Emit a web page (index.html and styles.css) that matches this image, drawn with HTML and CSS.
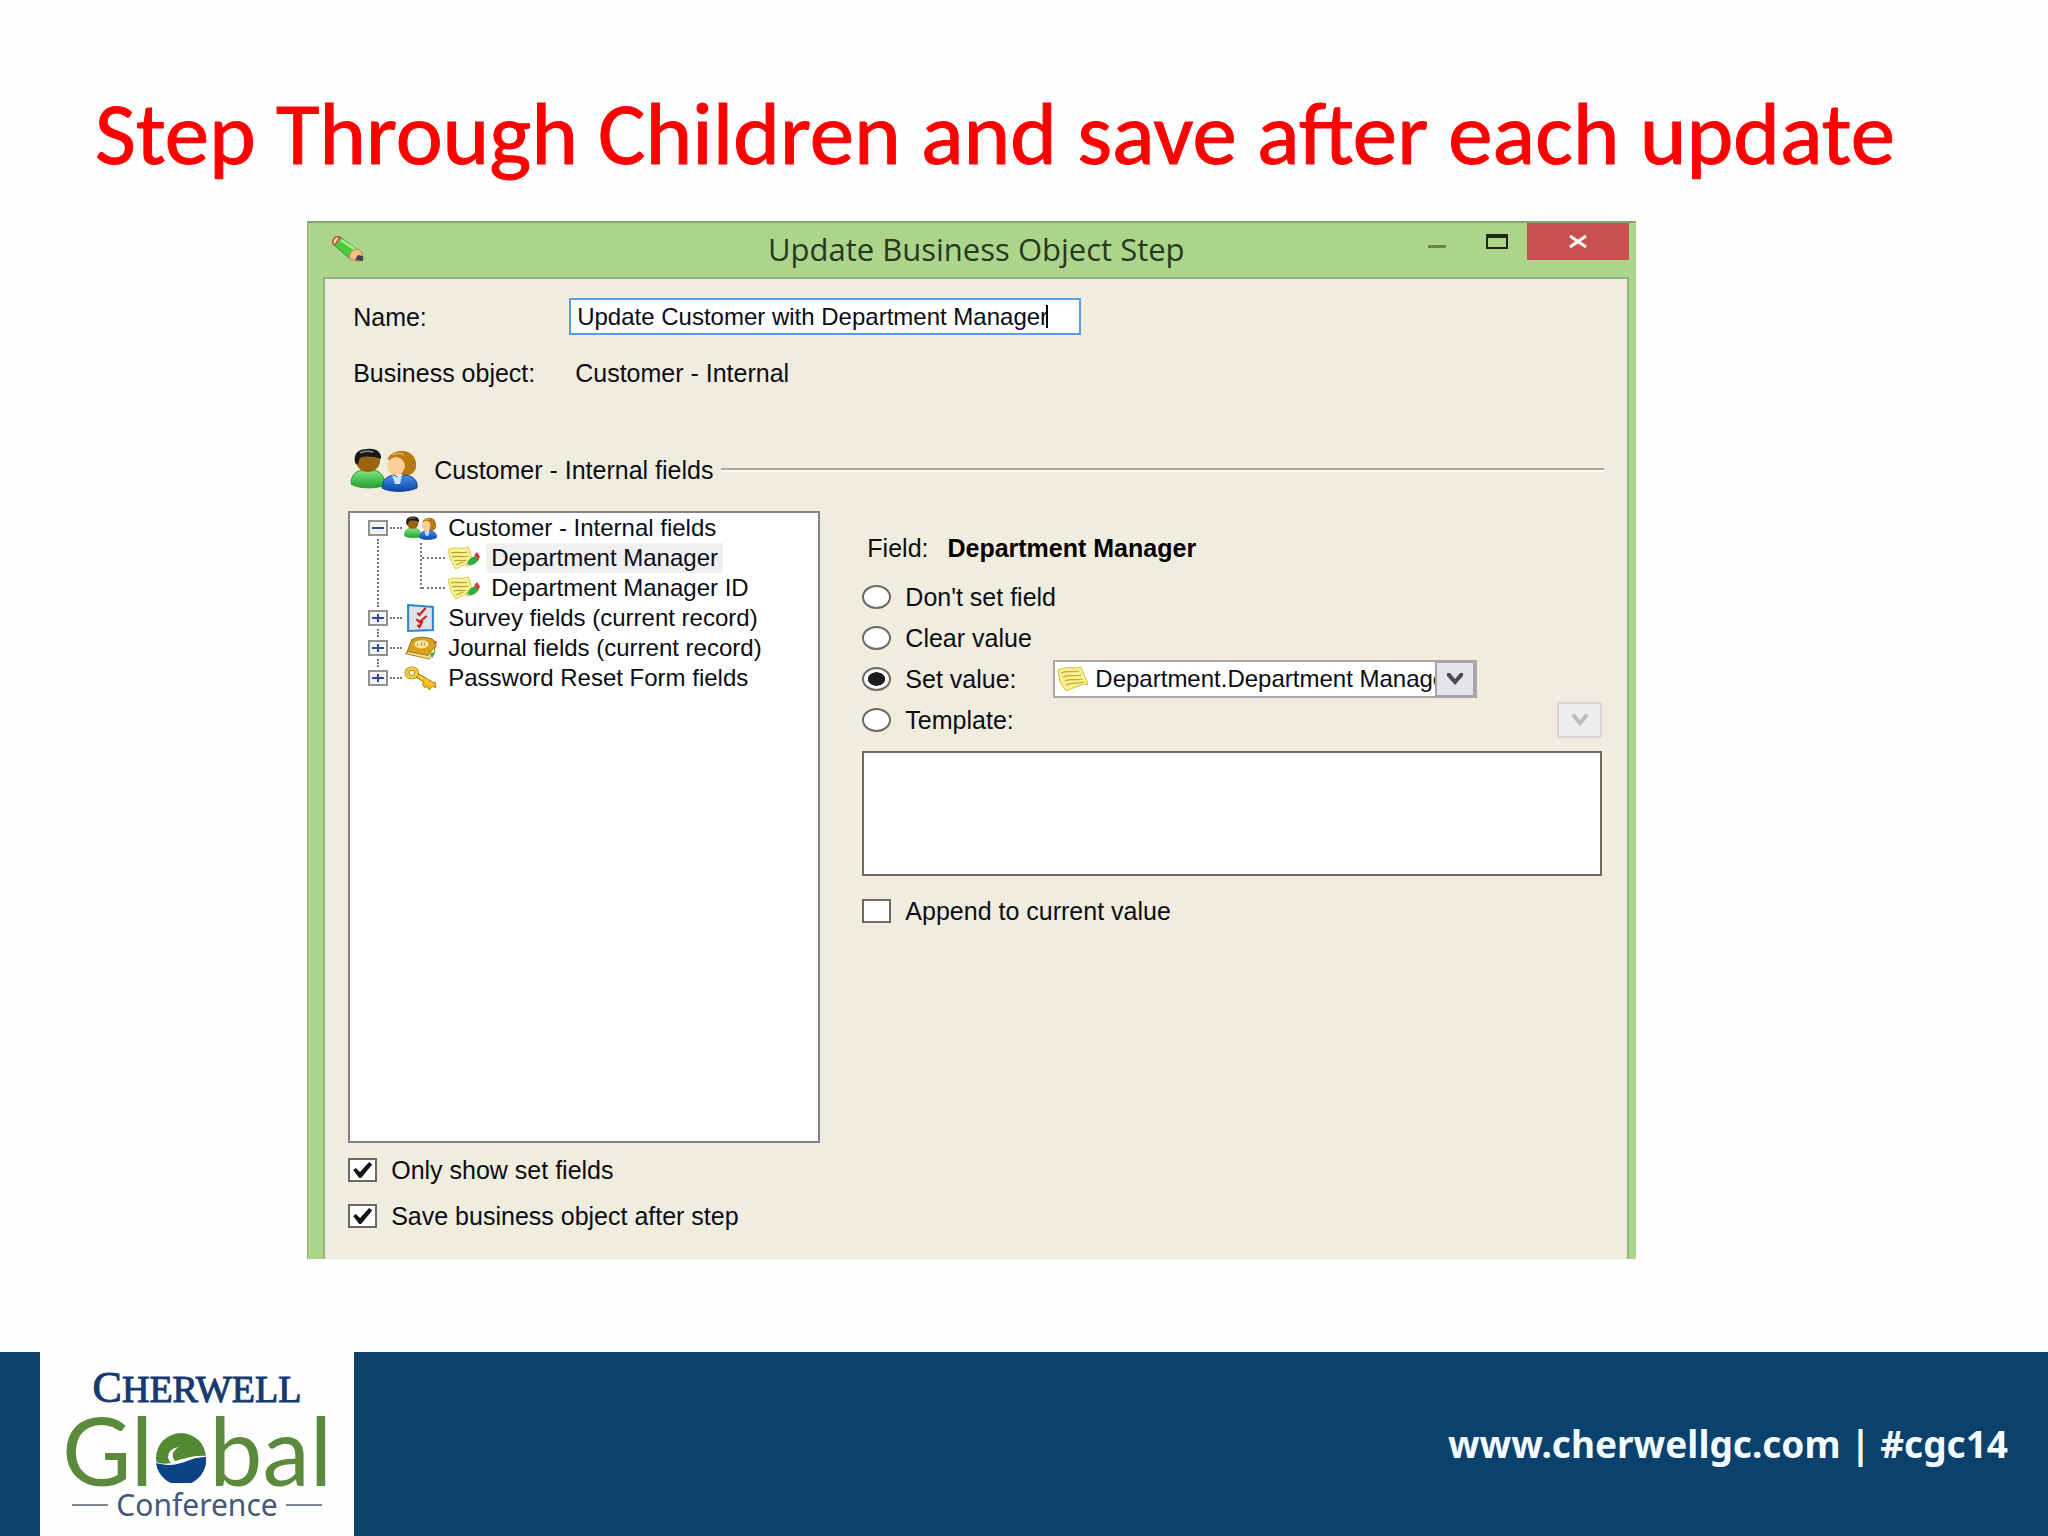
FILE: index.html
```html
<!DOCTYPE html>
<html lang="en">
<head>
    <meta charset="UTF-8">
    <meta name="viewport" content="width=device-width, initial-scale=1.0">
    <title>Step Through Children and save after each update</title>
    <link rel="stylesheet" href="styles.css">
</head>
<body>

    <!-- shared icons -->
    <svg class="sprite" aria-hidden="true">
        <defs>
            <linearGradient id="greenShirt" x1="0" y1="0" x2="0" y2="1">
                <stop offset="0" stop-color="#8be88a"/><stop offset="1" stop-color="#1fa32c"/>
            </linearGradient>
            <linearGradient id="blueShirt" x1="0" y1="0" x2="0" y2="1">
                <stop offset="0" stop-color="#4b93e6"/><stop offset="1" stop-color="#0a45a8"/>
            </linearGradient>
        </defs>
        <symbol id="people" viewBox="0 0 68 44" preserveAspectRatio="none">
            <path d="M1 36c0-9 5-14 16-15 12 0 18 6 18 16-9 4-26 4-34-1z" fill="url(#greenShirt)" stroke="#2c9a35"/>
            <ellipse cx="18" cy="13" rx="12" ry="11" fill="#9a6410"/>
            <path d="M5 15C3 5 9 1 17 1c9-1 15 3 14 10-6-3-15-3-19-2-3 1-3 4-4 8z" fill="#17181a"/>
            <path d="M10 5c4-2 9-2 13-1" stroke="#777" stroke-width="2" fill="none"/>
            <path d="M38 11c3-5 8-8 14-8 8 0 14 6 14 14 0 7-5 11-13 11z" fill="#b87a14"/>
            <ellipse cx="46" cy="18" rx="9" ry="9" fill="#fbcf96"/>
            <path d="M37 12c5-6 13-5 17 0 2 5 1 10-1 15 9 1 13-4 13-10C66 8 60 3 51 3c-7 0-12 4-14 9z" fill="#b87a14"/>
            <path d="M42 7c4-2 9-2 12 0" stroke="#dba53c" stroke-width="2" fill="none"/>
            <path d="M32 40c0-8 5-12 12-13l5 3 6-3c9 1 13 6 12 13-8 4-27 5-35 0z" fill="url(#blueShirt)" stroke="#0e4599"/>
            <path d="M42 27l3 9h5l2-9-5 2z" fill="#c9e6fb"/>
        </symbol>
        <symbol id="note" viewBox="0 0 32 26" preserveAspectRatio="none">
            <path d="M1 4C8 0 17 3 24 1l7 17c-6 0-12 3-22 7L3 16z" fill="#fbf08e" stroke="#d6bd3a"/>
            <path d="M4 7c6-3 12 0 18-2M6 11c6-3 12 0 18-2M8 15c6-3 12 0 17-2M9 19c6-3 12-1 18-3" stroke="#c4a936" stroke-width="1.2" fill="none"/>
        </symbol>
        <symbol id="note-edit" viewBox="0 0 34 24" preserveAspectRatio="none">
            <path d="M1 4C7 0 15 4 22 1l5 16c-6 0-10 2-18 6L4 15z" fill="#fbf390" stroke="#d9c64e"/>
            <path d="M4 7c5-2 11 1 17-1M5 11c5-2 11 1 17-1M7 15c5-2 9 1 13-1M9 19l8-3" stroke="#b5a338" stroke-width="1.3" fill="none"/>
            <path d="M20 18c3-5 5-7 9-8l4 3c-2 4-6 6-11 7z" fill="#31ad3d"/>
            <path d="M28 9l3-3 3 5-2 3z" fill="#d8392f"/>
            <path d="M19 21l2-4 3 3z" fill="#f3c58a"/>
        </symbol>
        <symbol id="chevron" viewBox="0 0 16 12">
            <path d="M0 0h3l5 6 5-6h3v3l-8 9-8-9z" fill="currentColor"/>
        </symbol>
    </svg>

    <h1>Step Through Children and save after each update</h1>

    <main class="dialog">
        <div class="titlebar">
            <svg class="pencil" viewBox="0 0 32 26" aria-hidden="true">
                <path d="M1 4c1-3 4-4 7-3l17 12-8 9L2 9C0 7 0 5 1 4z" fill="#4cc83c" stroke="#2f9129"/>
                <path d="M9 4l15 10" stroke="#9cf089" stroke-width="3"/>
                <path d="M1 5c1-4 4-5 7-4L3 9C1 8 0 7 1 5z" fill="#f6dcd4" stroke="#cc4a3e" stroke-width="1.5"/>
                <path d="M25 13c4 1 6 4 6 11-4 2-9 1-14-2 0-5 4-9 8-9z" fill="#f1bd83" stroke="#b98349"/>
                <path d="M26 19l5 1v5l-8-1z" fill="#444"/>
            </svg>
            <h2>Update Business Object Step</h2>
            <div class="window-buttons">
                <button type="button" aria-label="Minimize"><span class="min-glyph"></span></button>
                <button type="button" aria-label="Maximize"><span class="max-glyph"></span></button>
                <button type="button" class="close" aria-label="Close">
                    <svg width="18" height="13" viewBox="0 0 18 13"><path d="M1 1l16 11M17 1L1 12" stroke="#fff" stroke-width="3"/></svg>
                </button>
            </div>
        </div>

        <form class="client">
            <div class="form-row">
                <label for="stepName">Name:</label>
                <div class="name-box">
                    <input type="text" id="stepName" value="Update Customer with Department Manager">
                    <span class="caret"></span>
                </div>
            </div>
            <div class="form-row">
                <span>Business object:</span>
                <span class="object-name">Customer - Internal</span>
            </div>

            <div class="section-head">
                <svg class="section-icon" aria-hidden="true"><use href="#people"/></svg>
                <span>Customer - Internal fields</span>
                <span class="rule"></span>
            </div>

            <div class="panels">
                <div class="left">
                    <ul class="tree">
                        <li>
                            <div class="node">
                                <button type="button" class="toggle open" aria-label="Collapse"></button>
                                <span class="dots"></span>
                                <svg class="node-icon" aria-hidden="true"><use href="#people"/></svg>
                                <span class="text">Customer - Internal fields</span>
                            </div>
                            <ul class="children">
                                <li class="node">
                                    <span class="dots"></span>
                                    <svg class="node-icon" aria-hidden="true"><use href="#note-edit"/></svg>
                                    <span class="text selected">Department Manager</span>
                                </li>
                                <li class="node">
                                    <span class="dots"></span>
                                    <svg class="node-icon" aria-hidden="true"><use href="#note-edit"/></svg>
                                    <span class="text">Department Manager ID</span>
                                </li>
                            </ul>
                        </li>
                        <li>
                            <div class="node">
                                <button type="button" class="toggle" aria-label="Expand"></button>
                                <span class="dots"></span>
                                <svg class="node-icon survey" viewBox="0 0 32 28" preserveAspectRatio="none" aria-hidden="true">
                                    <path d="M4 1l24 2v23L4 27z" fill="#dfe3e8" stroke="#2d86cc" stroke-width="2"/>
                                    <path d="M13 9l2 2 6-7M12 15l3 3 7-6M13 21l2 2 3-6" stroke="#c2271f" stroke-width="2.2" fill="none"/>
                                </svg>
                                <span class="text">Survey fields (current record)</span>
                            </div>
                        </li>
                        <li>
                            <div class="node">
                                <button type="button" class="toggle" aria-label="Expand"></button>
                                <span class="dots"></span>
                                <svg class="node-icon" viewBox="0 0 34 26" preserveAspectRatio="none" aria-hidden="true">
                                    <path d="M8 4c7-4 17-3 22 0l3 7-6 11-24-4z" fill="#d9a21b" stroke="#8d6410"/>
                                    <path d="M1 19l4-2 20 4 6-9 1 5-6 8z" fill="#f3dd95" stroke="#a57a1a"/>
                                    <ellipse cx="18" cy="9" rx="8" ry="5" fill="#f9e7a4" stroke="#c8941f"/>
                                    <path d="M14 8v3M18 7v4M21 7v4" stroke="#c8941f"/>
                                    <path d="M27 19l5-1-3 6z" fill="#36a83c"/>
                                    <path d="M31 5l3 1-1 4z" fill="#e0522d"/>
                                </svg>
                                <span class="text">Journal fields (current record)</span>
                            </div>
                        </li>
                        <li>
                            <div class="node">
                                <button type="button" class="toggle" aria-label="Expand"></button>
                                <span class="dots"></span>
                                <svg class="node-icon" viewBox="0 0 34 28" preserveAspectRatio="none" aria-hidden="true">
                                    <path d="M12 10l18 12" stroke="#a87b0c" stroke-width="6"/>
                                    <path d="M19 21l3-4 5 3 5-1 1 6-4-1-3 4-2-4-3 1z" fill="#eebd1f" stroke="#a87b0c"/>
                                    <path d="M12 10l18 12" stroke="#f3c62a" stroke-width="4"/>
                                    <ellipse cx="8" cy="8" rx="5" ry="5" fill="none" stroke="#a87b0c" stroke-width="5"/>
                                    <ellipse cx="8" cy="8" rx="5" ry="5" fill="none" stroke="#f5cd3a" stroke-width="3.6"/>
                                </svg>
                                <span class="text">Password Reset Form fields</span>
                            </div>
                        </li>
                    </ul>
                    <div class="check-row">
                        <input type="checkbox" id="onlySet" checked>
                        <label for="onlySet">Only show set fields</label>
                    </div>
                    <div class="check-row">
                        <input type="checkbox" id="saveAfter" checked>
                        <label for="saveAfter">Save business object after step</label>
                    </div>
                </div>

                <div class="right">
                    <div class="field-name">Field: <strong>Department Manager</strong></div>
                    <div class="option">
                        <input type="radio" name="mode" id="modeNone">
                        <label for="modeNone">Don't set field</label>
                    </div>
                    <div class="option">
                        <input type="radio" name="mode" id="modeClear">
                        <label for="modeClear">Clear value</label>
                    </div>
                    <div class="option">
                        <input type="radio" name="mode" id="modeSet" checked>
                        <label for="modeSet">Set value:</label>
                        <div class="combo">
                            <svg class="combo-icon" aria-hidden="true"><use href="#note"/></svg>
                            <select aria-label="Value">
                                <option>Department.Department Manager</option>
                            </select>
                            <span class="combo-arrow"><svg width="16" height="12"><use href="#chevron"/></svg></span>
                        </div>
                    </div>
                    <div class="option">
                        <input type="radio" name="mode" id="modeTemplate">
                        <label for="modeTemplate">Template:</label>
                        <button type="button" class="template-menu" aria-label="Template menu" disabled>
                            <svg width="16" height="12"><use href="#chevron"/></svg>
                        </button>
                    </div>
                    <textarea aria-label="Template text"></textarea>
                    <div class="check-row">
                        <input type="checkbox" id="append">
                        <label for="append">Append to current value</label>
                    </div>
                </div>
            </div>
        </form>
    </main>

    <footer>
        <div class="logo">
            <div class="logo-top"><span class="big">C</span>HERWELL</div>
            <div class="logo-mid">
                <span>Gl</span>
                <svg class="globe" viewBox="0 0 50 50" aria-label="o">
                    <circle cx="25" cy="25" r="25" fill="#538a34"/>
                    <path d="M0 30c12 3 21 2 29-2s14-5 21-4a25 25 0 0 1-50 6z" fill="#0b4384"/>
                    <path d="M0 29c5 2 10 2 15 1-5-5-4-14 8-16-7 4-8 9-4 14 10-2 17-6 31-5v1c-12 0-17 4-25 6-9 3-17 2-25 0z" fill="#fff"/>
                </svg>
                <span>bal</span>
            </div>
            <div class="logo-bottom"><span>Conference</span></div>
        </div>
        <p class="site">www.cherwellgc.com | #cgc14</p>
    </footer>

</body>
</html>
```
FILE: styles.css
```css
* {
    box-sizing: border-box;
}

body {
    margin: 0;
    min-height: 100vh;
    display: flex;
    flex-direction: column;
    background-color: #fefefe;
    color: #0c0c14;
    font-family: "Liberation Sans", Arial, sans-serif;
    font-size: 25px;
    line-height: 30px;
}

button, input, select, textarea {
    font: inherit;
    color: inherit;
    margin: 0;
    padding: 0;
    border-radius: 0;
}

ul {
    list-style: none;
    margin: 0;
    padding: 0;
}

svg {
    display: block;
    flex: none;
}

.sprite {
    position: absolute;
    width: 0;
    height: 0;
}

h1 {
    margin: 81px 0 34px 95px;
    font-family: Carlito, Lato, sans-serif;
    font-size: 89px;
    line-height: 106px;
    font-weight: 400;
    color: #ff0000;
    -webkit-text-stroke: 1px #ff0000;
}

/* dialog window */
.dialog {
    width: 64.9%;
    margin-left: 15%;
    padding: 0 7px 0 15px;
    background-color: #add48b;
    border-top: 2px solid #85a46f;
    border-left: 1px solid #85a46f;
}

.titlebar {
    display: grid;
    grid-template-columns: 1fr auto 1fr;
    height: 54px;
}

.pencil {
    width: 32px;
    height: 26px;
    margin: 13px 0 0 9px;
}

h2 {
    margin: 0;
    font-family: "Open Sans", sans-serif;
    font-size: 31px;
    line-height: 52px;
    font-weight: 400;
    color: #27391f;
}

.window-buttons {
    display: flex;
    justify-content: flex-end;
    align-items: flex-start;
}

.window-buttons button {
    display: flex;
    justify-content: center;
    align-items: center;
    width: 60px;
    height: 37px;
    border: none;
    background: none;
}

.window-buttons .close {
    width: 102px;
    background-color: #c75050;
}

.min-glyph {
    width: 18px;
    height: 3px;
    margin-top: 10px;
    background-color: #66854f;
}

.max-glyph {
    width: 22px;
    height: 15px;
    border: 2px solid #1c2718;
    border-top-width: 4px;
}

.client {
    padding: 19px 23px 28px;
    background-color: #f0edde;
    border: 2px solid #93b57a;
    border-bottom: none;
}

.form-row {
    display: grid;
    grid-template-columns: 216px 1fr;
    align-items: center;
    height: 37px;
    margin: 0 0 19px 5px;
}

.name-box {
    position: relative;
    width: 512px;
}

.name-box input {
    display: block;
    width: 100%;
    height: 37px;
    padding: 0 6px;
    border: 2px solid #569de5;
    background-color: #fff;
    font-size: 24px;
    outline: none;
}

.caret {
    position: absolute;
    top: 7px;
    right: 33px;
    width: 2px;
    height: 23px;
    background-color: #000;
}

.object-name {
    padding-left: 6px;
}

.section-head {
    display: flex;
    align-items: center;
    gap: 8px;
    height: 44px;
    margin: 57px 0 19px 2px;
}

.section-icon {
    width: 68px;
    height: 44px;
    margin-right: 8px;
}

.rule {
    flex: 1;
    height: 4px;
    border-top: 2px solid #a9a797;
    background-color: #fbfaf3;
}

.panels {
    display: grid;
    grid-template-columns: 7fr 11fr;
    gap: 42px;
}

/* field tree */
.tree {
    height: 632px;
    margin-bottom: 12px;
    padding-left: 18px;
    background-color: #fff;
    border: 2px solid #82828c;
    font-size: 24px;
}

.tree > li {
    position: relative;
}

.tree > li:not(:last-child)::before {
    content: "";
    position: absolute;
    top: 26px;
    bottom: -4px;
    left: 9px;
    border-left: 2px dotted #777;
}

.node {
    display: flex;
    align-items: center;
    height: 30px;
}

.toggle {
    flex: none;
    width: 20px;
    height: 16px;
    border: 2px solid #929292;
    background:
        linear-gradient(#2f4b9c, #2f4b9c) center / 12px 2px no-repeat,
        linear-gradient(#2f4b9c, #2f4b9c) center / 2px 8px no-repeat,
        #f3f3f3;
}

.toggle.open {
    background: linear-gradient(#2f4b9c, #2f4b9c) center / 12px 2px no-repeat, #f3f3f3;
}

.dots {
    width: 12px;
    margin: 0 2px;
    border-top: 2px dotted #777;
}

.node-icon {
    width: 33px;
    height: 24px;
}

.node-icon.survey {
    height: 28px;
}

.text {
    margin-left: 6px;
    padding: 0 5px;
    white-space: nowrap;
}

.text.selected {
    background-color: #f0f0f0;
}

.children {
    position: relative;
    margin-left: 52px;
}

.children::before {
    content: "";
    position: absolute;
    top: 0;
    bottom: 14px;
    left: 0;
    border-left: 2px dotted #777;
}

.children .dots {
    width: 23px;
}

.check-row {
    display: flex;
    align-items: center;
    gap: 14px;
    height: 30px;
}

.check-row + .check-row {
    margin-top: 16px;
}

input[type="checkbox"] {
    appearance: none;
    flex: none;
    width: 29px;
    height: 24px;
    border: 2px solid #6c6a66;
    background-color: #fff;
    display: grid;
    place-items: center;
}

input[type="checkbox"]:checked::before {
    content: "";
    width: 19px;
    height: 16px;
    background-color: #111;
    clip-path: polygon(0 50%, 14% 38%, 36% 62%, 84% 0, 100% 16%, 42% 100%, 32% 100%);
}

/* value options */
.right {
    padding: 22px 2px 0 0;
}

.field-name {
    margin: 0 0 13px 5px;
}

.field-name strong {
    margin-left: 12px;
    color: #000;
}

.option {
    display: flex;
    align-items: center;
    gap: 14px;
    height: 41px;
}

.option label {
    width: 134px;
    white-space: nowrap;
}

input[type="radio"] {
    appearance: none;
    flex: none;
    width: 29px;
    height: 24px;
    border: 2px solid #6c6a66;
    border-radius: 50%;
    background-color: #fff;
}

input[type="radio"]:checked {
    background-image: radial-gradient(ellipse 9px 7px, #1d1d1d 92%, transparent);
}

.combo {
    display: flex;
    align-items: center;
    width: 424px;
    height: 38px;
    border: 2px solid #a8a8a8;
    background-color: #fff;
    font-size: 24px;
}

.combo-icon {
    width: 32px;
    height: 26px;
    margin: 0 6px 0 2px;
}

.combo select {
    appearance: none;
    flex: 1;
    min-width: 0;
    border: none;
    background: none;
    outline: none;
}

.combo-arrow {
    display: flex;
    justify-content: center;
    align-items: center;
    width: 40px;
    height: 36px;
    border: 2px solid #a5a5a8;
    background-color: #e4e4ea;
    color: #4c4c50;
}

.template-menu {
    display: flex;
    justify-content: center;
    align-items: center;
    width: 45px;
    height: 36px;
    margin-left: auto;
    border: 2px solid #d6d6d6;
    background-color: #ededed;
    color: #bdbdbd;
}

textarea {
    display: block;
    width: 100%;
    height: 125px;
    margin: 11px 0 20px;
    border: 2px solid #6c6a66;
    background-color: #fff;
    resize: none;
    outline: none;
}

/* conference banner */
footer {
    display: flex;
    justify-content: space-between;
    height: 184px;
    margin-top: auto;
    padding: 0 40px;
    background-color: #0a416d;
}

.logo {
    display: flex;
    flex-direction: column;
    align-items: center;
    width: 314px;
    padding-top: 14px;
    background-color: #fefefe;
}

.logo-top {
    font-family: "Liberation Serif", serif;
    font-size: 38px;
    line-height: 44px;
    color: #173a70;
    -webkit-text-stroke: 1px #173a70;
}

.logo-top .big {
    font-size: 44px;
}

.logo-mid {
    display: flex;
    align-items: flex-end;
    gap: 3px;
    font-family: Lato, sans-serif;
    font-size: 95px;
    line-height: 76px;
    color: #5b8a3c;
}

.globe {
    width: 50px;
    height: 50px;
    margin-bottom: 4px;
}

.logo-bottom {
    display: flex;
    align-items: center;
    gap: 8px;
    font-family: "Noto Sans", sans-serif;
    font-size: 30px;
    line-height: 36px;
    color: #44597a;
}

.logo-bottom::before,
.logo-bottom::after {
    content: "";
    width: 36px;
    height: 2px;
    background-color: #7c8794;
}

.site {
    margin: 0;
    font-family: "Noto Sans", sans-serif;
    font-size: 37px;
    line-height: 184px;
    font-weight: 700;
    color: #f4fbff;
}
```
